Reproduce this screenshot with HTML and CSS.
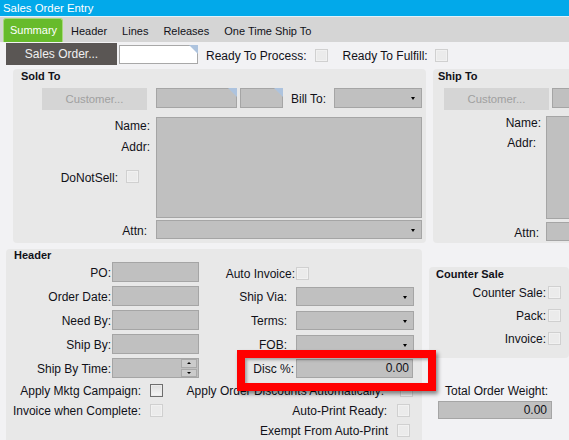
FILE: index.html
```html
<!DOCTYPE html>
<html>
<head>
<meta charset="utf-8">
<title>Sales Order Entry</title>
<link rel="stylesheet" href="styles.css">
</head>
<body>
<div class="titlebar">Sales Order Entry</div>
<div class="tabbar">
  <div class="tab active">Summary</div>
  <div class="tab">Header</div>
  <div class="tab">Lines</div>
  <div class="tab">Releases</div>
  <div class="tab">One Time Ship To</div>
</div>
<div class="toolbar">
  <div class="btn-dark">Sales Order...</div>
  <div class="input-white corner"></div>
  <span class="tb-label">Ready To Process:</span>
  <span class="cb tb-cb"></span>
  <span class="tb-label tb-label2">Ready To Fulfill:</span>
  <span class="cb tb-cb2"></span>
</div>

<div class="upper">
  <section class="panel soldto">
    <div class="ptitle">Sold To</div>
    <div class="rowA">
      <div class="btn-light">Customer...</div>
      <div class="fld f-cust corner"></div>
      <div class="fld f-cust2 corner"></div>
      <span class="lbl billto">Bill To:</span>
      <div class="fld combo f-bill"></div>
    </div>
    <div class="rowB">
      <div class="lblcol">
        <div class="l-name">Name:</div>
        <div class="l-addr">Addr:</div>
        <div class="l-dns"><span>DoNotSell:</span><span class="cb"></span></div>
      </div>
      <div class="fld big"></div>
    </div>
    <div class="rowC">
      <span class="attn">Attn:</span>
      <div class="fld combo f-attn"></div>
    </div>
  </section>

  <section class="panel shipto">
    <div class="ptitle">Ship To</div>
    <div class="rowA">
      <div class="btn-light">Customer...</div>
      <div class="fld f-cust corner"></div>
    </div>
    <div class="rowB s-rowB">
      <div class="lblcol s-lblcol">
        <div class="s-name">Name:</div>
        <div class="s-addr">Addr:</div>
      </div>
      <div class="fld s-big"></div>
    </div>
    <div class="rowC s-rowC">
      <span class="s-attn">Attn:</span>
      <div class="fld s-attnf"></div>
    </div>
  </section>
</div>

<div class="lower">
  <section class="panel header">
    <div class="ptitle h-title">Header</div>
    <div class="h-top">
      <div class="h-left">
        <div class="h-row"><span class="h-lbl">PO:</span><div class="fld h-fld"></div></div>
        <div class="h-row"><span class="h-lbl">Order Date:</span><div class="fld h-fld"></div></div>
        <div class="h-row"><span class="h-lbl">Need By:</span><div class="fld h-fld"></div></div>
        <div class="h-row"><span class="h-lbl">Ship By:</span><div class="fld h-fld"></div></div>
        <div class="h-row"><span class="h-lbl">Ship By Time:</span>
          <div class="fld h-fld spin">
            <div class="spinbox">
              <span class="sp sp-up"></span>
              <span class="sp sp-down"></span>
            </div>
          </div>
        </div>
      </div>
      <div class="h-right">
        <div class="r-row r-auto"><span class="r-lbl r-lbl-cb">Auto Invoice:</span><span class="cb"></span></div>
        <div class="r-row r-first"><span class="r-lbl">Ship Via:</span><div class="fld combo r-fld"></div></div>
        <div class="r-row"><span class="r-lbl">Terms:</span><div class="fld combo r-fld"></div></div>
        <div class="r-row"><span class="r-lbl">FOB:</span><div class="fld combo r-fld"></div></div>
        <div class="r-row"><span class="r-lbl r-lbl-disc">Disc %:</span><div class="fld r-fld num">0.00</div></div>
      </div>
    </div>
    <div class="h-bottom">
      <div class="hb-left"><span class="hb-lbl">Apply Mktg Campaign:</span><span class="cb cb-on"></span></div>
      <div class="hb-right hb-r1"><span class="hb-lbl hb-gap16">Apply Order Discounts Automatically:</span><span class="cb"></span></div>
      <div class="hb-left"><span class="hb-lbl">Invoice when Complete:</span><span class="cb"></span></div>
      <div class="hb-right hb-r2"><span class="hb-lbl hb-gap10">Auto-Print Ready:</span><span class="cb"></span></div>
      <div class="hb-left"></div>
      <div class="hb-right hb-r2"><span class="hb-lbl hb-gap9">Exempt From Auto-Print</span><span class="cb"></span></div>
    </div>
  </section>

  <div class="rightcol">
    <section class="panel counter">
      <div class="ptitle c-title">Counter Sale</div>
      <div class="c-row"><span>Counter Sale:</span><span class="cb"></span></div>
      <div class="c-row"><span>Pack:</span><span class="cb"></span></div>
      <div class="c-row"><span>Invoice:</span><span class="cb"></span></div>
    </section>
    <div class="tow-lbl">Total Order Weight:</div>
    <div class="fld tow-fld num">0.00</div>
  </div>
</div>

<div class="highlight"></div>
</body>
</html>
```

FILE: styles.css
```css
* { box-sizing: border-box; }
html, body { margin: 0; padding: 0; }
body {
  width: 569px;
  height: 440px;
  overflow: hidden;
  position: relative;
  background: #f2f2f4;
  font-family: "Liberation Sans", Arial, sans-serif;
  font-size: 12px;
  color: #111118;
}

/* title + tabs */
.titlebar {
  height: 17px;
  background: #02a9ea;
  border-bottom: 1px solid #e2f2fa;
  color: #fff;
  font-size: 11.4px;
  line-height: 16px;
  padding-left: 3px;
}
.tabbar {
  height: 25px;
  background: #d5d5d5;
  display: flex;
  align-items: flex-end;
  padding-left: 3px;
}
.tab {
  height: 24px;
  line-height: 27px;
  padding: 0 7px;
  font-size: 11px;
  margin-right: 1px;
  white-space: nowrap;
}
.tab.active {
  width: 60px;
  padding: 0 6px;
  line-height: 23px;
  background: #67bb2b;
  border: 1px solid #a6d97a;
  border-bottom: none;
  border-radius: 3px 3px 0 0;
  color: #fff;
  margin-right: 1px;
}

/* toolbar */
.toolbar {
  height: 23px;
  padding-top: 1px;
  display: flex;
  align-items: flex-start;
}
.btn-dark {
  margin-left: 6px;
  width: 111px;
  height: 22px;
  background: #5a5654;
  color: #f0f0f0;
  text-align: center;
  line-height: 22px;
}
.input-white {
  margin-left: 2px;
  margin-top: 2px;
  width: 79px;
  height: 19px;
  background: #fff;
  border: 1px solid #a8a8a8;
  position: relative;
}
.tb-label {
  margin-left: 8px;
  margin-top: 6px;
  line-height: 14px;
  white-space: nowrap;
}
.tb-label2 { margin-left: 15px; }
.tb-cb { margin-left: 8px; margin-top: 6px; }
.tb-cb2 { margin-left: 7px; margin-top: 6px; }

/* generic widgets */
.cb {
  display: inline-block;
  flex: none;
  width: 13px;
  height: 13px;
  border: 1px solid #d0d0d0;
  background: #ebebeb;
  box-shadow: inset 0 0 0 1px #f1f1f1;
}
.cb-on {
  border-color: #6e6e6e;
  background: linear-gradient(#dedede, #f6f6f6);
  box-shadow: inset 0 0 0 1px #ececec;
}
.fld {
  position: relative;
  flex: none;
  background: #c0c0c0;
  border: 1px solid #a5a5a5;
}
.corner::after {
  content: "";
  position: absolute;
  top: -1px;
  right: -1px;
  border-top: 9px solid #adc3de;
  border-left: 9px solid transparent;
}
.combo::after {
  content: "";
  position: absolute;
  right: 6px;
  top: 50%;
  margin-top: -1px;
  border-left: 2.5px solid transparent;
  border-right: 2.5px solid transparent;
  border-top: 3px solid #000;
}
.num {
  text-align: right;
  padding-right: 3px;
  line-height: 16px;
}
.panel {
  background: #e8e8e8;
  border-radius: 4px;
  flex: none;
}
.ptitle {
  font-weight: bold;
  font-size: 11px;
  line-height: 14px;
  height: 14px;
  white-space: nowrap;
}
.btn-light {
  flex: none;
  width: 105px;
  height: 22px;
  background: #d5d5d5;
  color: #a0a0a0;
  text-align: center;
  line-height: 22px;
  font-size: 11.3px;
}

/* upper section */
.upper {
  display: flex;
  margin-top: 4px;
  height: 174px;
}
.soldto {
  margin-left: 13px;
  width: 413px;
  height: 174px;
}
.soldto .ptitle { padding-left: 8px; }
.rowA {
  display: flex;
  align-items: flex-start;
  margin-top: 5px;
  height: 22px;
}
.soldto .btn-light { margin-left: 29px; }
.f-cust { margin-left: 9px; width: 81px; height: 20px; }
.f-cust2 { margin-left: 3px; width: 43px; height: 20px; }
.billto {
  flex: none;
  margin-left: 8px;
  line-height: 22px;
  white-space: nowrap;
}
.f-bill { margin-left: 8px; width: 88px; height: 20px; }
.rowB {
  display: flex;
  margin-top: 7px;
}
.lblcol {
  width: 137px;
  text-align: right;
  flex: none;
}
.l-name { margin-top: 2px; line-height: 14px; }
.l-addr { margin-top: 7px; line-height: 14px; }
.l-dns {
  margin-top: 17px;
  display: flex;
  justify-content: flex-end;
  align-items: center;
  line-height: 14px;
  padding-right: 11px;
}
.l-dns .cb { margin-left: 8px; margin-top: -3px; }
.big { margin-left: 6px; width: 266px; height: 101px; }
.rowC {
  display: flex;
  align-items: center;
  margin-top: 2px;
}
.attn {
  flex: none;
  width: 134px;
  text-align: right;
  margin-right: 9px;
  line-height: 14px;
  padding-top: 2px;
}
.f-attn { width: 266px; height: 19px; }

.shipto {
  margin-left: 7px;
  width: 150px;
  height: 174px;
}
.shipto .ptitle { padding-left: 5px; }
.shipto .btn-light { margin-left: 11px; }
.shipto .f-cust { margin-left: 3px; }
.s-rowB { margin-top: 6px; }
.s-lblcol { width: 108px; }
.s-name { line-height: 14px; }
.s-addr { line-height: 14px; margin-top: 6px; padding-right: 5px; }
.s-big { margin-left: 5px; width: 100px; height: 103px; }
.s-rowC { margin-top: 3px; }
.s-attn {
  flex: none;
  width: 106px;
  text-align: right;
  margin-right: 7px;
  line-height: 14px;
  padding-top: 3px;
}
.s-attnf { width: 100px; height: 19px; }

/* lower section */
.lower {
  display: flex;
  margin-top: 6px;
}
.header {
  margin-left: 6px;
  width: 416px;
  height: 200px;
}
.h-title { padding-left: 8px; line-height: 13px; height: 13px; }
.h-top { display: flex; }
.h-left { width: 193px; flex: none; }
.h-row {
  display: flex;
  align-items: center;
  margin-bottom: 4px;
}
.h-row:last-child { margin-bottom: 0; }
.h-lbl {
  flex: none;
  width: 106px;
  text-align: right;
  padding-right: 1px;
  padding-top: 1px;
  white-space: nowrap;
}
.h-fld { width: 87px; height: 20px; }
.spinbox {
  position: absolute;
  right: 1px;
  top: 0;
  width: 16px;
  height: 18px;
  display: flex;
  flex-direction: column;
  gap: 1px;
}
.sp {
  position: relative;
  height: 8.5px;
  background: #cbcbcb;
  border: 1px solid #a9a9a9;
}
.sp::after {
  content: "";
  position: absolute;
  left: 5px;
  top: 2px;
  border-left: 2px solid transparent;
  border-right: 2px solid transparent;
}
.sp-up::after { border-bottom: 2px solid #000; }
.sp-down::after { border-top: 2px solid #000; }

.h-right {
  margin-left: 21px;
  width: 194px;
  flex: none;
  padding-top: 5px;
}
.r-row {
  display: flex;
  align-items: center;
  margin-top: 5px;
}
.r-auto { margin-top: 0; height: 13px; }
.r-row.r-first { margin-top: 7px; }
.r-lbl {
  width: 76px;
  flex: none;
  text-align: right;
  padding-right: 9px;
  padding-top: 1px;
  white-space: nowrap;
}
.r-lbl-cb { padding-right: 1px; }
.r-lbl-disc { padding-right: 2px; }
.r-fld { width: 118px; height: 19px; }
.r-fld.num { width: 117px; }

.h-bottom {
  margin-top: 2px;
  display: grid;
  grid-template-columns: 159px 249px;
  grid-auto-rows: 20px;
}
.hb-left, .hb-right {
  display: flex;
  align-items: center;
  justify-content: flex-end;
  white-space: nowrap;
}
.hb-left { padding-right: 2px; }
.hb-left .hb-lbl { margin-right: 9px; }
.hb-lbl { padding-top: 1px; }
.hb-r1 { padding-right: 1px; }
.hb-r2 { padding-right: 4px; }
.hb-gap16 { margin-right: 16px; }
.hb-gap10 { margin-right: 10px; }
.hb-gap9 { margin-right: 9px; }

.rightcol {
  margin-left: 7px;
  width: 140px;
  flex: none;
  padding-top: 18px;
}
.counter {
  width: 140px;
  height: 91px;
}
.c-title { padding-left: 7px; }
.c-row {
  display: flex;
  align-items: center;
  justify-content: flex-end;
  height: 23px;
  padding-right: 8px;
}
.c-row span:first-child { margin-right: 2px; padding-top: 1px; }
.tow-lbl {
  margin-top: 26px;
  padding-left: 16px;
  line-height: 14px;
  white-space: nowrap;
}
.tow-fld {
  margin-top: 3px;
  margin-left: 9px;
  width: 114px;
  height: 18px;
  padding-right: 4px;
}

/* red highlight box overlaying the form */
.highlight {
  position: absolute;
  left: 237px;
  top: 350px;
  width: 199px;
  height: 41px;
  border: 8px solid #ff0000;
  box-shadow: 2px 3px 4px rgba(0,0,0,0.45), inset 2px 2px 3px rgba(0,0,0,0.3);
}
```
